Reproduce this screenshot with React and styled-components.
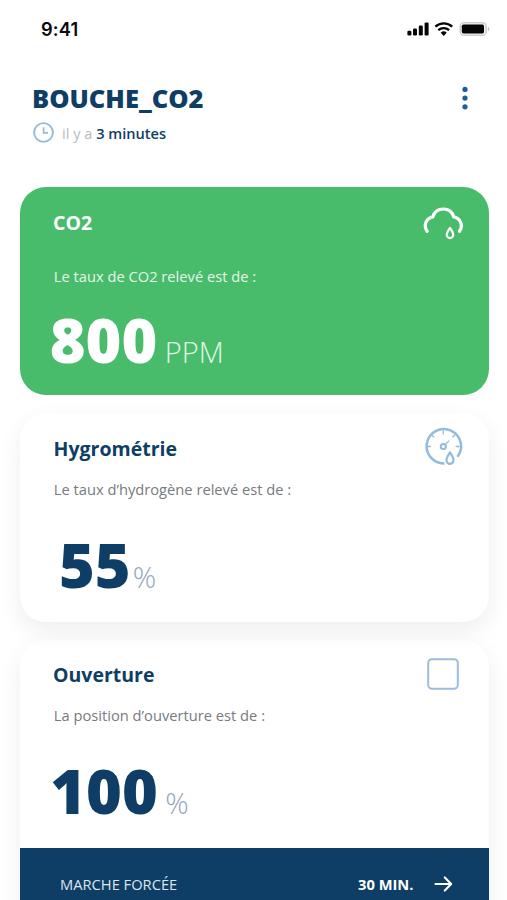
import React from "react";
import styled, { createGlobalStyle } from "styled-components";

const navy = "#0e3e65";
const sky = "#93bbdb";

const GlobalStyle = createGlobalStyle`
  * { box-sizing: border-box; }
  html, body { margin: 0; background: #fff; overflow: hidden; }
  body { font-family: "Open Sans", "Noto Sans", sans-serif; }
  svg { display: block; flex: none; }
`;

const Screen = styled.main`
  width: 507px;
  height: 900px;
  overflow: hidden;
  background: #fff;
  display: flex;
  flex-direction: column;
`;

const StatusBar = styled.div`
  height: 56px;
  flex: none;
  padding: 2px 17px 0 41px;
  display: flex;
  align-items: center;
  justify-content: space-between;
`;

const Clock = styled.time`
  font: 600 18.3px/24px Inter, sans-serif;
  letter-spacing: 0.1px;
  color: #0a0a0a;
`;

const Header = styled.header`
  height: 131px;
  flex: none;
  padding: 27px 35px 0 32px;
  display: flex;
  justify-content: space-between;
`;

const Title = styled.h1`
  margin: 0;
  font-size: 25.5px;
  line-height: 30px;
  font-weight: 800;
  color: ${navy};
`;

const Updated = styled.p`
  margin: 9px 0 0 1px;
  display: flex;
  align-items: center;
  gap: 8px;
  font-size: 14.6px;
  line-height: 22px;
  color: #b6bac0;
`;

const Elapsed = styled.strong`
  font-weight: 600;
  color: ${navy};
`;

const MenuButton = styled.button`
  align-self: flex-start;
  margin-top: 2px;
  padding: 0;
  border: 0;
  background: none;
`;

const Cards = styled.div`
  flex: none;
  width: 469px;
  margin-left: 19.5px;
  display: flex;
  flex-direction: column;
  gap: 18px;
`;

const Card = styled.section`
  position: relative;
  z-index: ${(p) => p.$layer};
  height: ${(p) => p.$height}px;
  border-radius: 26px;
  overflow: hidden;
  display: flex;
  flex-direction: column;
  background: ${(p) => (p.$filled ? "#49bc6b" : "#fff")};
  color: ${(p) => (p.$filled ? "#fff" : navy)};
  box-shadow: ${(p) => (p.$filled ? "none" : "0 9px 25px rgba(0, 0, 0, 0.07)")};
`;

const CardHead = styled.div`
  height: ${(p) => p.$height}px;
  flex: none;
  padding: ${(p) => p.$top}px ${(p) => p.$right}px 0 33.5px;
  display: flex;
  align-items: flex-start;
  justify-content: space-between;
`;

const CardTitle = styled.h2`
  margin: ${(p) => p.$offset}px 0 0 ${(p) => p.$indent || 0}px;
  font-size: 19.5px;
  line-height: 28px;
  font-weight: 700;
`;

const Description = styled.p`
  margin: 0 0 0 34.3px;
  font-size: 14.7px;
  line-height: 20px;
  color: ${(p) => (p.$light ? "#e3f6e8" : "#777b80")};
`;

const Reading = styled.div`
  margin: ${(p) => p.$top}px 0 0 ${(p) => p.$left}px;
  display: flex;
  align-items: baseline;
  gap: ${(p) => p.$gap}px;
  line-height: 62px;
`;

const Amount = styled.span`
  font-size: 61.2px;
  font-weight: 800;
`;

const Unit = styled.span`
  font-size: 29px;
  font-weight: 300;
  color: ${(p) => (p.$light ? "#e3f6e8" : "#91a7bd")};
`;

const ForcedRun = styled.div`
  margin-top: auto;
  height: 112px;
  padding: 25.5px 36px 0 40.5px;
  display: flex;
  align-items: flex-start;
  background: ${navy};
  color: #fff;
  font-size: 14.7px;
  line-height: 20px;

  svg {
    margin-top: 1px;
  }
`;

const ForcedLabel = styled.span`
  flex: 1;
  color: #dce5ed;
`;

const Duration = styled.strong`
  margin-right: 20px;
  font-weight: 700;
`;

const StatusIcons = () => (
  <svg width="84" height="18" viewBox="406 20 84 18">
    <g fill="#050505">
      <rect x="407.4" y="30.7" width="4" height="4.7" rx="1.2" />
      <rect x="413" y="28.5" width="4" height="6.9" rx="1.2" />
      <rect x="418.8" y="25.6" width="4" height="9.8" rx="1.2" />
      <rect x="424.6" y="22.4" width="4" height="13" rx="1.2" />
      <path d="M443.7 36l-3-3.3a4.5 4.5 0 0 1 6 0z" />
    </g>
    <g fill="none" stroke="#050505" strokeWidth="2.3">
      <path d="M435.4 26.6a12.3 12.3 0 0 1 16.8 0" />
      <path d="M438.3 30.2a8 8 0 0 1 10.8 0" />
    </g>
    <rect x="460.2" y="22.6" width="26" height="12.8" rx="4" fill="#eee" stroke="#cdcdcd" strokeWidth="1.4" />
    <rect x="461.8" y="24.4" width="22.2" height="9.2" rx="1.8" fill="#050505" />
    <path d="M487.8 27v4.2q1.6-.6 1.6-2.1t-1.6-2.1z" fill="#bbb" />
  </svg>
);

const ClockIcon = () => (
  <svg width="21" height="22" viewBox="0 0 21 22" fill="none" stroke={sky}>
    <circle cx="10.5" cy="10.5" r="9.4" strokeWidth="1.9" />
    <path d="M10.6 5.3v5.6h4.4" strokeWidth="1.7" />
  </svg>
);

const DotsIcon = () => (
  <svg width="14" height="26" viewBox="0 0 14 26" fill="#1f5b9c">
    <circle cx="7" cy="4.4" r="2.6" />
    <circle cx="7" cy="13.1" r="2.6" />
    <circle cx="7" cy="21.8" r="2.6" />
  </svg>
);

const RainIcon = () => (
  <svg width="40" height="34" viewBox="423 207 40 34" fill="none" stroke="#fff" strokeLinecap="round" strokeLinejoin="round">
    <path
      d="M427.1 231.2a9.1 9.1 0 0 1 5.8-14.4c1.4-4.9 5.5-7.8 10.4-7.8s9 2.9 10.4 7.8a9.1 9.1 0 0 1 5.8 14.4"
      strokeWidth="3.2"
    />
    <path d="M450 228c-1.9 2.6-3.2 4.7-3.2 6.7a3.2 3.4 0 0 0 6.4 0c0-2-1.3-4.1-3.2-6.7z" strokeWidth="2.2" />
  </svg>
);

const GaugeIcon = () => (
  <svg width="40" height="40" viewBox="423 427 40 40" fill="none" stroke={sky}>
    <path d="M444.5 463.4a17.2 17.2 0 1 1 12.9-6.6" strokeWidth="2.5" />
    <path
      d="M443.3 430.5v4M427 446.5h4M455.6 446.5h4M431.8 435l2.3 2.3M454.8 435l-2.3 2.3M445.4 444.4l3.8-3.8"
      strokeWidth="1.3"
    />
    <circle cx="443.3" cy="446.5" r="2.6" strokeWidth="2" />
    <path d="M450 452.5c-1.9 2.9-3.5 5.1-3.5 7.5a3.5 3.9 0 0 0 7 0c0-2.4-1.6-4.6-3.5-7.5z" strokeWidth="2.2" />
  </svg>
);

const SquareIcon = () => (
  <svg width="32" height="32" viewBox="0 0 32 32" fill="none" stroke="#9cbddd" strokeWidth="2">
    <rect x="1.2" y="1.2" width="29.6" height="29.6" rx="3.8" />
  </svg>
);

const ArrowIcon = () => (
  <svg width="19" height="18" viewBox="0 0 19 18" fill="none" stroke="#fff" strokeWidth="2.1" strokeLinecap="round" strokeLinejoin="round">
    <path d="M1.5 9H17M10.8 2.4L17.2 9l-6.4 6.6" />
  </svg>
);

export default function App() {
  return (
    <>
      <GlobalStyle />
      <Screen>
        <StatusBar>
          <Clock>9:41</Clock>
          <StatusIcons />
        </StatusBar>
        <Header>
          <div>
            <Title>BOUCHE_CO2</Title>
            <Updated>
              <ClockIcon />
              <span>
                il y a <Elapsed>3 minutes</Elapsed>
              </span>
            </Updated>
          </div>
          <MenuButton aria-label="Menu">
            <DotsIcon />
          </MenuButton>
        </Header>
        <Cards>
          <Card $filled $height={207.5} $layer={3}>
            <CardHead $height={79} $top={20} $right={26}>
              <CardTitle $offset={2}>CO2</CardTitle>
              <RainIcon />
            </CardHead>
            <Description $light>Le taux de CO2 relevé est de :</Description>
            <Reading $top={22.7} $left={30.2} $gap={7.5}>
              <Amount>800</Amount>
              <Unit $light>PPM</Unit>
            </Reading>
          </Card>
          <Card $height={209.5} $layer={2}>
            <CardHead $height={66} $top={14.5} $right={26}>
              <CardTitle $offset={7.5} $indent={0.6}>Hygrométrie</CardTitle>
              <GaugeIcon />
            </CardHead>
            <Description>Le taux d’hydrogène relevé est de :</Description>
            <Reading $top={35.3} $left={39.5} $gap={2}>
              <Amount>55</Amount>
              <Unit>%</Unit>
            </Reading>
          </Card>
          <Card $height={320} $layer={1}>
            <CardHead $height={65} $top={17.5} $right={29.5}>
              <CardTitle $offset={3.5}>Ouverture</CardTitle>
              <SquareIcon />
            </CardHead>
            <Description>La position d’ouverture est de :</Description>
            <Reading $top={35} $left={30.7} $gap={7.5}>
              <Amount>100</Amount>
              <Unit>%</Unit>
            </Reading>
            <ForcedRun>
              <ForcedLabel>MARCHE FORCÉE</ForcedLabel>
              <Duration>30 MIN.</Duration>
              <ArrowIcon />
            </ForcedRun>
          </Card>
        </Cards>
      </Screen>
    </>
  );
}
